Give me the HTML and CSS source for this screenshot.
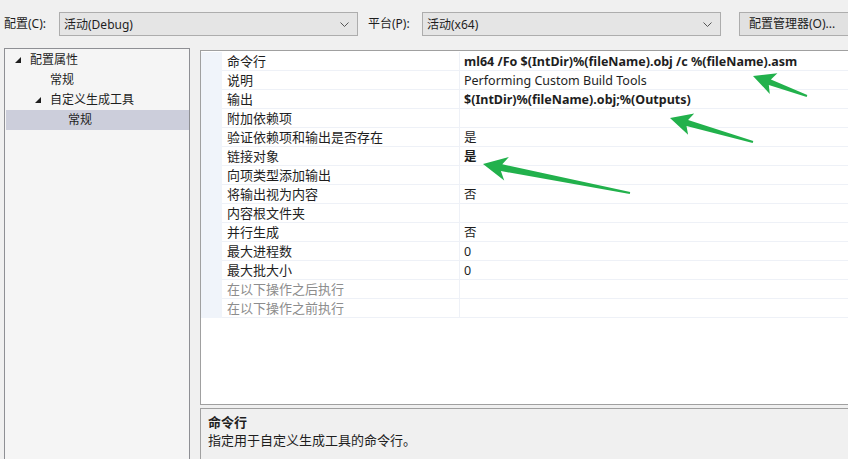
FILE: index.html
```html
<!DOCTYPE html>
<html lang="zh-CN">
<head>
<meta charset="utf-8">
<title>属性页</title>
<link rel="stylesheet" href="styles.css">
</head>
<body>
<div class="topbar">
  <span class="lbl lbl-cfg">配置(C):</span>
  <div class="combo"><span>活动(Debug)</span><svg class="chev" width="9" height="5" viewBox="0 0 9 5"><path d="M0.5 0.5 L4.5 4.5 L8.5 0.5" fill="none" stroke="#555" stroke-width="1"/></svg></div>
  <span class="lbl lbl-plat">平台(P):</span>
  <div class="combo"><span>活动(x64)</span><svg class="chev" width="9" height="5" viewBox="0 0 9 5"><path d="M0.5 0.5 L4.5 4.5 L8.5 0.5" fill="none" stroke="#555" stroke-width="1"/></svg></div>
  <div class="btn">配置管理器(O)...</div>
</div>

<div class="main">
  <div class="tree">
    <div class="node n1"><span class="exp"></span>配置属性</div>
    <div class="node n2">常规</div>
    <div class="node n3"><span class="exp"></span>自定义生成工具</div>
    <div class="node n4 sel">常规</div>
  </div>

  <div class="rightcol">
    <div class="props">
      <div class="row"><div class="m"></div><div class="name">命令行</div><div class="val b">ml64 /Fo $(IntDir)%(fileName).obj /c %(fileName).asm</div></div>
      <div class="row"><div class="m"></div><div class="name">说明</div><div class="val">Performing Custom Build Tools</div></div>
      <div class="row"><div class="m"></div><div class="name">输出</div><div class="val b">$(IntDir)%(fileName).obj;%(Outputs)</div></div>
      <div class="row"><div class="m"></div><div class="name">附加依赖项</div><div class="val"></div></div>
      <div class="row"><div class="m"></div><div class="name">验证依赖项和输出是否存在</div><div class="val">是</div></div>
      <div class="row"><div class="m"></div><div class="name">链接对象</div><div class="val b">是</div></div>
      <div class="row"><div class="m"></div><div class="name">向项类型添加输出</div><div class="val"></div></div>
      <div class="row"><div class="m"></div><div class="name">将输出视为内容</div><div class="val">否</div></div>
      <div class="row"><div class="m"></div><div class="name">内容根文件夹</div><div class="val"></div></div>
      <div class="row"><div class="m"></div><div class="name">并行生成</div><div class="val">否</div></div>
      <div class="row"><div class="m"></div><div class="name">最大进程数</div><div class="val">0</div></div>
      <div class="row"><div class="m"></div><div class="name">最大批大小</div><div class="val">0</div></div>
      <div class="row dis"><div class="m"></div><div class="name">在以下操作之后执行</div><div class="val"></div></div>
      <div class="row dis"><div class="m"></div><div class="name">在以下操作之前执行</div><div class="val"></div></div>
    </div>
    <div class="desc">
      <div class="desc-title">命令行</div>
      <div class="desc-text">指定用于自定义生成工具的命令行。</div>
    </div>
  </div>
</div>

<svg class="arrows" width="848" height="459" viewBox="0 0 848 459">
  <polygon fill="#22b14c" points="753,76 777.4,73.3 770.9,79.4 807.3,95.1 806.7,96.9 768.8,85 769.8,93.9"/>
  <polygon fill="#22b14c" points="670,118 694.2,113.5 688.1,120.1 753.3,141 752.7,143 686.5,125.9 688.1,134.7"/>
  <polygon fill="#22b14c" points="483,164 508.9,156.9 502.3,164.3 630.2,192 629.8,194 500.9,171.1 504.2,180.5"/>
</svg>
</body>
</html>
```

FILE: styles.css
```css
html, body {
  margin: 0;
  padding: 0;
}
body {
  width: 848px;
  height: 459px;
  overflow: hidden;
  position: relative;
  background: #f0f0f0;
  color: #1e1e1e;
  font-family: "Noto Sans", "Noto Sans CJK SC", sans-serif;
  font-size: 12px;
}

.topbar {
  display: flex;
  align-items: center;
  height: 24px;
  padding: 12px 0 12px 4px;
}
.lbl {
  line-height: 24px;
  white-space: nowrap;
  flex: none;
}
.lbl-cfg { width: 55px; }
.lbl-plat { width: 54px; margin-left: 10px; }
.combo {
  box-sizing: border-box;
  width: 299px;
  height: 24px;
  border: 1px solid #adadad;
  background: #e5e5e5;
  display: flex;
  align-items: center;
  justify-content: space-between;
  padding: 0 8px 0 4px;
  flex: none;
}
.chev { display: block; }
.btn {
  box-sizing: border-box;
  margin-left: 18px;
  width: 109px;
  height: 24px;
  border: 1px solid #adadad;
  border-right: none;
  background: #e1e1e1;
  line-height: 22px;
  padding-left: 9px;
  white-space: nowrap;
  flex: none;
}

.main {
  display: flex;
  padding-left: 4px;
}
.tree {
  box-sizing: border-box;
  width: 186px;
  height: 411px;
  border: 1px solid #8e8f94;
  border-bottom: none;
  background: #f5f5f5;
  padding-top: 1px;
  flex: none;
}
.node {
  height: 20px;
  line-height: 20px;
  display: flex;
  align-items: center;
  white-space: nowrap;
}
.exp {
  width: 0;
  height: 0;
  border-left: 6px solid transparent;
  border-bottom: 6px solid #1e1e1e;
  margin-right: 9px;
}
.n1 { padding-left: 10px; }
.n2 { padding-left: 45px; }
.n3 { padding-left: 30px; }
.n4 { padding-left: 62px; }
.sel {
  margin-left: 1px;
  padding-left: 62px;
  background: #cccedb;
}

.rightcol {
  margin-left: 10px;
  margin-top: 2px;
  width: 648px;
  flex: none;
}
.props {
  box-sizing: border-box;
  height: 355px;
  border: 1px solid #a0a0a0;
  border-right: none;
  background: #ffffff;
  padding-top: 1px;
}
.row {
  display: flex;
  height: 19px;
}
.row .m {
  width: 21px;
  background: #f0f4fa;
  flex: none;
}
.row .name {
  box-sizing: border-box;
  width: 238px;
  border-bottom: 1px solid #eef1f7;
  border-right: 1px solid #eef1f7;
  padding: 1px 0 0 5px;
  font-size: 13px;
  line-height: 17px;
  white-space: nowrap;
  flex: none;
}
.row .val {
  flex: 1;
  border-bottom: 1px solid #eef1f7;
  padding: 1px 0 0 4px;
  font-size: 12.5px;
  line-height: 17px;
  white-space: nowrap;
}
.row .val.b { font-weight: bold; }
.row.dis .name { color: #8d8d8d; }

.desc {
  box-sizing: border-box;
  margin-top: 3px;
  height: 51px;
  border: 1px solid #a0a0a0;
  border-right: none;
  border-bottom: none;
  background: #f0f0f0;
  padding: 4px 0 0 7px;
}
.desc-title {
  font-weight: bold;
  font-size: 13px;
  line-height: 18px;
}
.desc-text {
  font-size: 13px;
  line-height: 18px;
}

.arrows {
  position: absolute;
  left: 0;
  top: 0;
  pointer-events: none;
}
```
